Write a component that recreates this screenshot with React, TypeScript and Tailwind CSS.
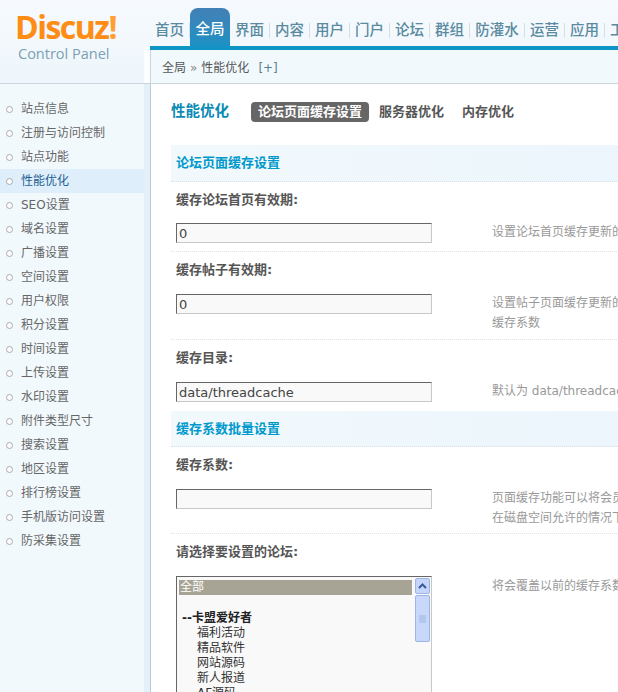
const nav = ["首页", "全局", "界面", "内容", "用户", "门户", "论坛", "群组", "防灌水", "运营", "应用", "工具"];
const side = ["站点信息", "注册与访问控制", "站点功能", "性能优化", "SEO设置", "域名设置", "广播设置", "空间设置", "用户权限", "积分设置", "时间设置", "上传设置", "水印设置", "附件类型尺寸", "搜索设置", "地区设置", "排行榜设置", "手机版访问设置", "防采集设置"];
const font = "font-['DejaVu_Sans','Noto_Sans_CJK_SC',sans-serif]";

function Section({ title, h }: { title: string; h: string }) {
  return (
    <div className={`${h} flex items-center pl-[5px] bg-gradient-to-r from-[#f2f9fd] to-[#e9f4fb] border-b border-dotted border-[#d5dfe5] text-[13px] font-bold text-[#09c]`}>
      {title}
    </div>
  );
}

function Row({ label, value, tips, h, labelH = "h-[42px]", border = true }: { label: string; value: string; tips: string[]; h: string; labelH?: string; border?: boolean }) {
  return (
    <div className={`${h} pl-[5px] ${border ? "border-b border-dotted border-[#dde3e6]" : ""}`}>
      <div className={`${labelH} flex items-center pb-[6px] text-[13px] font-bold text-[#555]`}>{label}</div>
      <div className="flex">
        <input readOnly value={value} className="w-[256px] h-[20px] shrink-0 px-[2px] border border-[#c8c8c8] border-t-[#666] border-l-[#666] bg-[#f9f9f9] text-[13px] text-[#444] outline-none" />
        <div className="ml-[60px] w-[400px] shrink-0 -mt-[1px] text-[12px] leading-[20px] text-[#999]">
          {tips.map((t) => <div key={t}>{t}</div>)}
        </div>
      </div>
    </div>
  );
}

export default function App() {
  return (
    <div className={`${font} w-[618px] h-[692px] overflow-hidden bg-white flex flex-col`}>
      <header className="h-[84px] shrink-0 flex bg-gradient-to-b from-[#f6fafe] to-[#eef6fb] border-b border-[#c9d6dd]">
        <div className="w-[144px] shrink-0 pl-[15px] pt-[9px]">
          <div className="font-['Open_Sans',sans-serif] font-bold text-[32px] leading-[36px] tracking-[-1.5px] text-[#ff8c14]">Discuz<span className="text-[#ffa030]">!</span></div>
          <div className="font-['Open_Sans',sans-serif] text-[14.5px] leading-[18px] pl-[3px] text-[#7c9fb2]">Control Panel</div>
        </div>
        <div className="w-[6px] shrink-0 mt-[46px] bg-[#fbfdfe]" />
        <div className="flex-1 min-w-0 flex flex-col">
          <div className="h-[46px] flex items-end">
            {nav.map((n) =>
              n === "全局" ? (
                <div key={n} className="h-[42px] mb-[-4px] w-[40px] shrink-0 pt-[2px] rounded-t-[8px] bg-gradient-to-b from-[#4180b6] to-[#0e93c5] flex items-center justify-center text-[14.5px] font-medium text-white z-10">{n}</div>
              ) : (
                <div key={n} className="h-[38px] shrink-0 pt-[7px] flex items-center">
                  <span className={`${n === "防灌水" ? "w-[55px]" : "w-[40px]"} h-[15px] flex items-center justify-center border-r border-[#d3dfe6] text-[14.5px] font-medium text-[#5a8a9f]`}>{n}</span>
                </div>
              )
            )}
          </div>
          <div className="h-[4px] bg-[#0c95c4]" />
          <div className="flex-1 pl-[11px] pt-[3px] flex items-center bg-[#f2f9fd] border-l border-[#c9d6dd] text-[12px] text-[#555]">
            全局 <span className="mx-[4px] text-[#888]">»</span> 性能优化 <span className="ml-[9px] text-[#5a7f92]">[+]</span>
          </div>
        </div>
      </header>
      <div className="flex-1 min-h-0 flex">
        <aside className="w-[151px] shrink-0 bg-gradient-to-r from-[#f2f9fd] from-96% to-[#e4f0f9] to-96% border-r border-[#b7cbdc] pt-[13px]">
          {side.map((s) => (
            <div key={s} className={`h-[24px] w-[144px] flex items-center pl-[6px] text-[12px] ${s === "性能优化" ? "bg-[#deeefa] text-[#1f5f95]" : "text-[#666]"}`}>
              <span className="w-[7px] h-[7px] rounded-full border border-[#aaa] bg-white mr-[8px] shrink-0" />
              {s}
            </div>
          ))}
        </aside>
        <main className="flex-1 min-w-0 overflow-hidden pl-[20px]">
          <div className="h-[61px] flex items-center pb-[6px]">
            <span className="text-[14.5px] font-bold text-[#0b8ab5] mr-[22px] shrink-0">性能优化</span>
            <span className="h-[20px] px-[7px] flex items-center shrink-0 rounded-[4px] bg-[#666] text-white text-[13px] font-bold">论坛页面缓存设置</span>
            <span className="ml-[10px] shrink-0 text-[13px] font-bold text-[#555]">服务器优化</span>
            <span className="ml-[18px] shrink-0 text-[13px] font-bold text-[#555]">内存优化</span>
          </div>
          <div className="w-[700px]">
            <Section title="论坛页面缓存设置" h="h-[37px]" />
            <Row label="缓存论坛首页有效期:" value="0" tips={["设置论坛首页缓存更新的时间"]} h="h-[70px]" labelH="h-[41px]" />
            <Row label="缓存帖子有效期:" value="0" tips={["设置帖子页面缓存更新的时间", "缓存系数"]} h="h-[88px]" />
            <Row label="缓存目录:" value="data/threadcache" tips={["默认为 data/threadcache"]} h="h-[71px]" border={false} />
            <Section title="缓存系数批量设置" h="h-[36px]" />
            <Row label="缓存系数:" value="" tips={["页面缓存功能可以将会员", "在磁盘空间允许的情况下"]} h="h-[87px]" />
            <div className="pl-[5px]">
              <div className="h-[42px] flex items-center pb-[6px] text-[13px] font-bold text-[#555]">请选择要设置的论坛:</div>
              <div className="flex">
                <div className="w-[256px] h-[200px] border border-[#c8c8c8] border-t-[#666] border-l-[#666] bg-[#f9f9f9] flex shrink-0 overflow-hidden">
                  <div className="flex-1 pt-[2px] pl-[2px] pr-[3px] text-[12px] leading-[15px] text-[#333]">
                    <div className="bg-[#a8a495] text-white pl-[1px] mt-[0.5px]">全部</div>
                    <div className="h-[16px]" />
                    <div className="pl-[3px] font-bold text-[#222]">--卡盟爱好者</div>
                    {["福利活动", "精品软件", "网站源码", "新人报道", "AF源码"].map((t) => <div key={t} className="pl-[18px]">{t}</div>)}
                  </div>
                  <div className="w-[15px] shrink-0 mr-[1px] pt-[1px] flex flex-col gap-[1px]">
                    <div className="h-[16px] shrink-0 rounded-[2px] bg-[#c5d5fb] border border-[#9db4e6] flex items-center justify-center">
                      <svg width="9" height="6" viewBox="0 0 9 6"><path d="M1 5l3.5-3.5L8 5" fill="none" stroke="#3b5a9a" strokeWidth="2" /></svg>
                    </div>
                    <div className="h-[47px] shrink-0 rounded-[2px] bg-[#c8d8fb] border border-[#9db4e6] flex items-center justify-center">
                      <svg width="7" height="8" viewBox="0 0 7 8"><path d="M0 1h7M0 3h7M0 5h7M0 7h7" stroke="#9fb4e0" /></svg>
                    </div>
                  </div>
                </div>
                <div className="ml-[60px] w-[400px] shrink-0 text-[12px] leading-[20px] text-[#999]">将会覆盖以前的缓存系数</div>
              </div>
            </div>
          </div>
        </main>
      </div>
    </div>
  );
}
